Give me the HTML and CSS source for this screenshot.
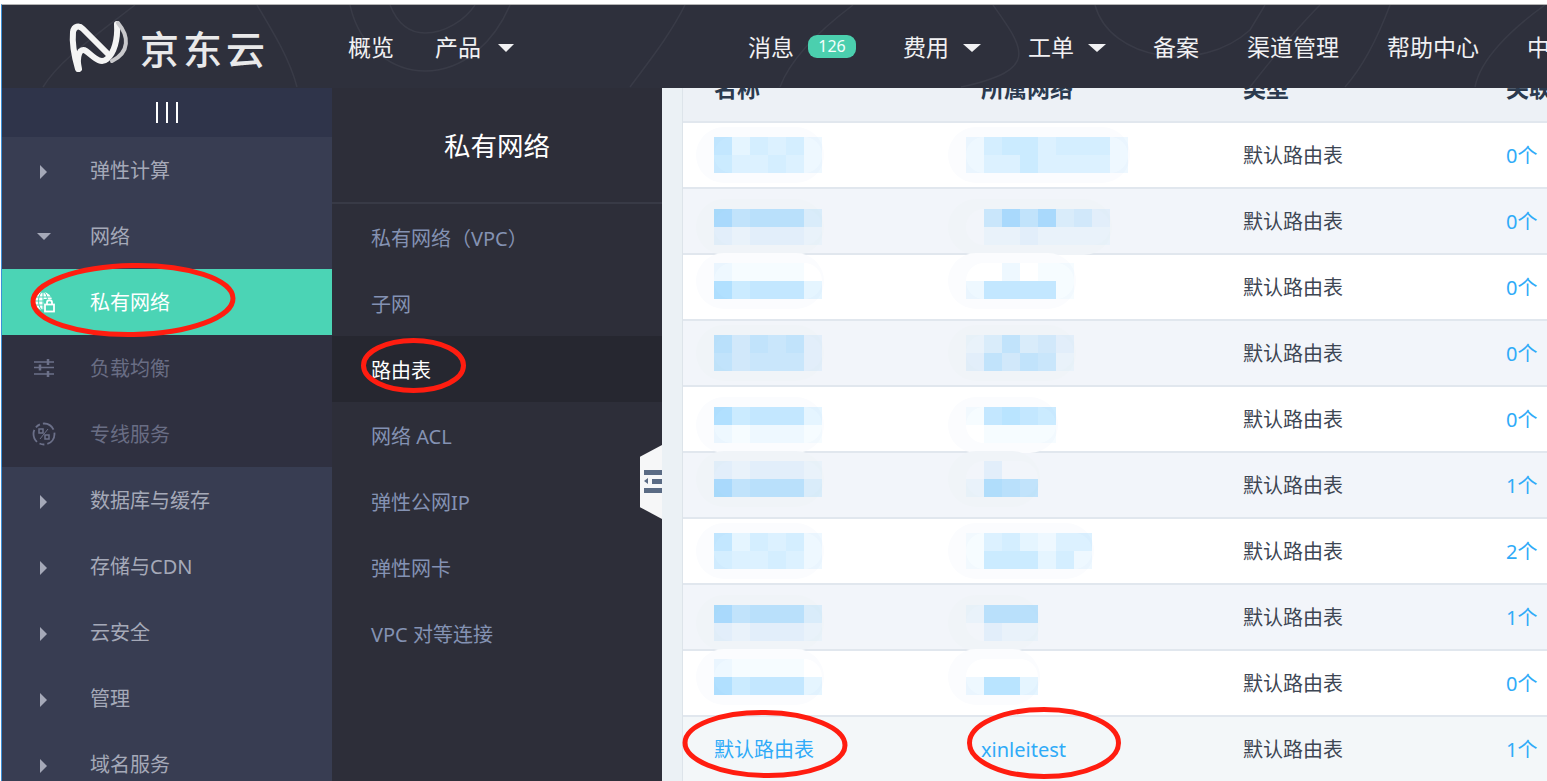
FILE: index.html
```html
<!doctype html>
<html lang="zh-CN">
<head>
<meta charset="utf-8">
<title>路由表</title>
	<link rel="stylesheet" href="styles.css">
</head>

<body>
	<div class="window">
		<div class="topbar">
			<svg class="topbar-lines" width="1545" height="83" viewBox="2 5 1545 83" fill="none">
				<path d="M257 5C275 35 290 60 297 87M43 87C60 60 90 40 135 5M350 5C360 50 395 71 425 71C465 71 495 40 510 5M390 5C398 25 410 33 425 33C445 33 465 20 475 5M685 5C670 35 650 60 630 87M853 5C820 30 790 60 780 87M993 5C1025 50 1040 70 961 87M1095 5C1110 60 1200 75 1250 30L1265 5M1250 87C1275 55 1295 30 1320 5M1390 5C1375 45 1360 70 1345 87M1545 5C1510 30 1480 60 1475 87"/>
			</svg>
			<div class="brand">
				<svg class="brand-mark" width="64" height="54" viewBox="68 20 64 54" fill="none">
					<path class="mark-main" d="M79 69C76 56 80 47 86 51C93 56 100 65 107 59C114 53 118 40 117 24"/>
					<path class="mark-main" d="M78 69C74 55 72 42 73 32C74 26 79 25 83 29L108 54"/>
					<path class="mark-side" d="M118 23C129 36 130 52 112 61"/>
				</svg>
				<span class="brand-name">京东云</span>
			</div>
			<ul class="nav nav-left">
				<li>概览</li>
				<li>产品<i class="caret"></i></li>
			</ul>
			<ul class="nav nav-right">
				<li class="tight">消息<span class="badge">126</span></li>
				<li class="tight">费用<i class="caret"></i></li>
				<li class="tight">工单<i class="caret"></i></li>
				<li>备案</li>
				<li>渠道管理</li>
				<li>帮助中心</li>
				<li>中文</li>
			</ul>
		</div>

		<div class="layout">
			<div class="sidebar">
				<div class="toggle"><i></i><i></i><i></i></div>
				<a class="side-item"><span class="side-icon"><i class="arrow-right"></i></span>弹性计算</a>
				<a class="side-item"><span class="side-icon"><i class="arrow-down"></i></span>网络</a>
				<a class="side-item active"><span class="side-icon">
					<svg width="22" height="22" viewBox="0 0 22 22" fill="none">
						<circle cx="10" cy="10" r="9" fill="#fff"/>
						<path d="M10 1V19M1 10H19M2 6H18M2 14H18" stroke="#4bd4b5"/>
						<ellipse cx="10" cy="10" rx="4.500" ry="9" stroke="#4bd4b5"/>
						<rect x="10.500" y="8" width="11.500" height="14" fill="#4bd4b5"/>
						<rect x="12" y="13.500" width="9" height="7" stroke="#fff" stroke-width="1.800"/>
						<path d="M14 13.500V11.500C14 8.500 19 8.500 19 11.500V13.500" stroke="#fff" stroke-width="1.800"/>
					</svg>
				</span>私有网络</a>
				<a class="side-item sub"><span class="side-icon">
					<svg width="20" height="18" viewBox="0 0 20 18" fill="none" stroke="#6c7089">
						<path d="M0 3H20M0 8.500H20M0 15H20" stroke-width="1.5"/>
						<path d="M14 0V6M6 5.500V11.500M14 12V18" stroke-width="2.500"/>
					</svg>
				</span>负载均衡</a>
				<a class="side-item sub"><span class="side-icon">
					<svg width="24" height="24" viewBox="0 0 24 24" fill="none" stroke="#6c7089">
						<circle cx="12" cy="12" r="10.500" stroke-width="1.800" stroke-dasharray="13 3 5 3"/>
						<rect x="7" y="7" width="4" height="4" stroke-width="1.500"/>
						<rect x="13" y="13" width="4" height="4" stroke-width="1.500"/>
						<path d="M16 7L8 17" stroke-width="1"/>
					</svg>
				</span>专线服务</a>
				<a class="side-item"><span class="side-icon"><i class="arrow-right"></i></span>数据库与缓存</a>
				<a class="side-item"><span class="side-icon"><i class="arrow-right"></i></span>存储与CDN</a>
				<a class="side-item"><span class="side-icon"><i class="arrow-right"></i></span>云安全</a>
				<a class="side-item"><span class="side-icon"><i class="arrow-right"></i></span>管理</a>
				<a class="side-item"><span class="side-icon"><i class="arrow-right"></i></span>域名服务</a>
			</div>

			<div class="subnav">
				<h2 class="subnav-title">私有网络</h2>
				<a class="sub-item">私有网络（VPC）</a>
				<a class="sub-item">子网</a>
				<a class="sub-item active">路由表</a>
				<a class="sub-item">网络 ACL</a>
				<a class="sub-item">弹性公网IP</a>
				<a class="sub-item">弹性网卡</a>
				<a class="sub-item">VPC 对等连接</a>
				<div class="collapse-handle">
					<i></i>
					<i class="mid"></i>
					<i></i>
				</div>
			</div>

			<div class="main">
				<div class="table">
					<div class="row head">
						<div>名称</div>
						<div>所属网络</div>
						<div>类型</div>
						<div>关联子网</div>
					</div>
					<div class="row">
						<div class="mosaic off-a" data-cells="735452/644542"></div>
						<div class="mosaic net off-a" data-cells="256645552/244644442"></div>
						<div>默认路由表</div>
						<a class="link">0个</a>
					</div>
					<div class="row alt">
						<div class="mosaic off-b" data-cells="967773/212221"></div>
						<div class="mosaic net off-b" data-cells="05969342/01121111"></div>
						<div>默认路由表</div>
						<a class="link">0个</a>
					</div>
					<div class="row">
						<div class="mosaic off-c" data-cells="211110/967773"></div>
						<div class="mosaic net off-c" data-cells="002011/277771"></div>
						<div>默认路由表</div>
						<a class="link">0个</a>
					</div>
					<div class="row alt">
						<div class="mosaic off-a" data-cells="746562/645552"></div>
						<div class="mosaic net off-a" data-cells="136342/264651"></div>
						<div>默认路由表</div>
						<a class="link">0个</a>
					</div>
					<div class="row">
						<div class="mosaic off-b" data-cells="967773/212221"></div>
						<div class="mosaic net off-b" data-cells="17876/01111"></div>
						<div>默认路由表</div>
						<a class="link">0个</a>
					</div>
					<div class="row alt">
						<div class="mosaic off-c" data-cells="212221/967773"></div>
						<div class="mosaic net off-c" data-cells="0200/1876"></div>
						<div>默认路由表</div>
						<a class="link">1个</a>
					</div>
					<div class="row">
						<div class="mosaic off-a" data-cells="735452/544542"></div>
						<div class="mosaic net off-a" data-cells="1453244/1666352"></div>
						<div>默认路由表</div>
						<a class="link">2个</a>
					</div>
					<div class="row alt">
						<div class="mosaic off-b" data-cells="967773/212221"></div>
						<div class="mosaic net off-b" data-cells="1777/0211"></div>
						<div>默认路由表</div>
						<a class="link">1个</a>
					</div>
					<div class="row">
						<div class="mosaic off-c" data-cells="211110/967773"></div>
						<div class="mosaic net off-c" data-cells="0000/2883"></div>
						<div>默认路由表</div>
						<a class="link">0个</a>
					</div>
					<div class="row current">
						<a class="link">默认路由表</a>
						<a class="link">xinleitest</a>
						<div>默认路由表</div>
						<a class="link">1个</a>
					</div>
				</div>
			</div>
		</div>
	</div>

	<!-- hand-drawn marks on top of the screenshot -->
	<svg class="marks" width="1547" height="781" viewBox="0 0 1547 781" fill="none">
		<ellipse cx="133" cy="300" rx="100" ry="34.500" transform="rotate(-1 133 300)"/>
		<ellipse cx="413.500" cy="365.500" rx="50" ry="25"/>
		<ellipse cx="765" cy="744" rx="80" ry="31.500" transform="rotate(1 765 744)"/>
		<ellipse cx="1044" cy="743" rx="74.500" ry="33.500"/>
	</svg>

	<script src="script.js"></script>
</body>
</html>
```

FILE: styles.css
```css
*{padding: 0;margin: 0;box-sizing: border-box;}
html,body{height: 100%;overflow: hidden;}
body{
	font-family: "Noto Sans", "Noto Sans CJK SC", sans-serif;
	font-size: 20px;
	background-color: #fff;
	padding-left: 1px;
	padding-top: 4px;
	position: relative;}
ul{list-style: none;}
i{display: block;}

.window{
	height: 100%;
	border-left: 1px solid #3d8fd6;
	border-top: 1px solid #b4b4b4;
	display: flex;
	flex-direction: column;}


/* top bar */
.topbar{
	height: 83px;
	flex: none;
	background-color: #2e303c;
	color: #f1f1f3;
	display: flex;
	align-items: center;
	position: relative;
	overflow: hidden;
	white-space: nowrap;}
.topbar-lines{position: absolute;left: 0;top: 0;}
.topbar-lines path{stroke: #393b47;stroke-width: 1.5;}

.brand{
	width: 346px;
	flex: none;
	padding-left: 66px;
	display: flex;
	align-items: center;
	gap: 8px;
	position: relative;}
.mark-main{stroke: #f4f4f4;stroke-width: 6;stroke-linecap: round;}
.mark-side{stroke: #c9c9cc;stroke-width: 4;stroke-linecap: round;}
.brand-name{
	font-size: 39px;
	font-weight: 500;
	line-height: 50px;
	letter-spacing: 4px;
	color: #e9e9ea;
	margin-top: 5px;}

.nav{
	display: flex;
	font-size: 23px;
	line-height: 34px;
	position: relative;}
.nav li{display: flex;align-items: center;flex: none;}
.nav-left{gap: 41px;}
.nav-right{gap: 48px;margin-left: 234px;}
.nav-right .tight{margin-right: -1px;}

.caret{
	margin-left: 14px;
	margin-top: 2px;
	border-style: solid;
	border-width: 8px 9px 0;
	border-color: #f1f1f3 transparent transparent;}
.nav-left .caret{margin-left: 17px;border-width: 8px 8px 0;}

.badge{
	width: 48px;
	height: 23px;
	margin-left: 14px;
	border-radius: 9px;
	background-color: #4bcfae;
	color: #f4fffc;
	font-size: 16px;
	line-height: 23px;
	text-align: center;}


/* page under the top bar */
.layout{
	flex: 1;
	display: flex;
	min-height: 0;
	overflow: hidden;}


/* first menu */
.sidebar{
	width: 330px;
	flex: none;
	background-color: #383d52;
	overflow: hidden;}
.toggle{
	height: 49px;
	background-color: #2f344a;
	display: flex;
	justify-content: center;
	align-items: center;
	gap: 8px;}
.toggle i{width: 2px;height: 21px;background-color: #fff;}

.side-item{
	height: 66px;
	padding-top: 2px;
	display: flex;
	align-items: center;
	color: #a5a9b8;
	line-height: 28px;}
.side-item.sub{background-color: #2f3040;color: #696d84;}
.side-item.active{background-color: #4bd4b5;color: #fff;}
.side-icon{
	width: 83px;
	margin-right: 5px;
	margin-top: -2px;
	flex: none;
	display: flex;
	justify-content: center;
	align-items: center;}
.arrow-right{
	margin-top: 4px;
	border-style: solid;
	border-width: 7px 0 7px 7px;
	border-color: transparent transparent transparent #a5a9b8;}
.arrow-down{
	border-style: solid;
	border-width: 7px 7px 0;
	border-color: #a5a9b8 transparent transparent;}


/* second menu */
.subnav{
	width: 330px;
	flex: none;
	background-color: #2d2e39;
	position: relative;}
.subnav-title{
	height: 116px;
	border-bottom: 2px solid #383a46;
	color: #fff;
	font-size: 26.500px;
	font-weight: 400;
	line-height: 116px;
	text-align: center;}
.sub-item{
	display: block;
	height: 66px;
	padding-left: 39px;
	color: #8492b3;
	line-height: 69px;}
.sub-item.active{background-color: #262730;color: #fff;}

.collapse-handle{
	position: absolute;
	right: 0;
	top: 357px;
	width: 22px;
	height: 74px;
	background-color: #f6f7f8;
	clip-path: polygon(0 16%, 100% 0, 100% 100%, 0 84%);
	padding: 25px 0 0 4px;}
.collapse-handle i{height: 5px;margin-bottom: 4px;background-color: #5a6b84;}
.collapse-handle .mid{margin-left: 8px;position: relative;}
.collapse-handle .mid::before{
	content: "";
	position: absolute;
	left: -8px;
	top: -1px;
	border-style: solid;
	border-width: 3.5px 4px 3.5px 0;
	border-color: transparent #5a6b84 transparent transparent;}


/* table */
.main{
	flex: 1;
	min-width: 0;
	background-color: #ebf1f5;
	padding-left: 20px;
	position: relative;
	z-index: 1;
	overflow: hidden;}
.table{
	border-left: 1px solid #dde4ea;
	background-color: #fff;}
.row{
	height: 66px;
	padding-left: 31px;
	padding-top: 2px;
	border-bottom: 2px solid #e1e7ee;
	display: grid;
	grid-template-columns: 267px 262px 263px 1fr;
	align-items: center;
	background-color: #fff;
	color: #3d4653;
	line-height: 28px;
	white-space: nowrap;}
.row.alt{background-color: #f2f5fa;}
.row.current{background-color: #f3f7f9;}
.row.head{
	height: 35px;
	padding-top: 0;
	background-color: #edf1f6;
	color: #2b3a4e;
	font-size: 23px;
	font-weight: 700;
	line-height: 0;
	align-items: start;
	overflow: hidden;}
.link{color: #2fabf8;}

.mosaic{
	width: fit-content;
	align-self: start;
	border-radius: 20px;
	box-shadow: -8px 0 0 10px #fbfcfe;}
.row.alt .mosaic{box-shadow: -8px 0 0 10px #f0f4f8;}
.mosaic.net{margin-left: -15px;}
.off-a{margin-top: 12px;}
.off-b{margin-top: 18px;}
.off-c{margin-top: 6px;}
.mosaic-line{display: flex;position: relative;}
.mosaic-line span{width: 18px;height: 18px;}


/* red circles */
.marks{position: absolute;left: 0;top: 0;z-index: 5;pointer-events: none;}
.marks ellipse{stroke: #ff1d10;stroke-width: 5;}
```

FILE: script.js
```js
// blurred names: one digit per square, 0 = nothing, 9 = strongest blue
var boxes = document.querySelectorAll(".mosaic");
for (var i = 0; i < boxes.length; i++) {
	var lines = boxes[i].getAttribute("data-cells").split("/");
	for (var j = 0; j < lines.length; j++) {
		var line = document.createElement("div");
		line.className = "mosaic-line";
		for (var k = 0; k < lines[j].length; k++) {
			var cell = document.createElement("span");
			var d = Number(lines[j][k]);
			cell.style.backgroundColor = d == 0 ? "transparent" : "rgba(38,170,255," + d * 0.04 + ")";
			line.appendChild(cell);
		}
		boxes[i].appendChild(line);
	}
}
```
